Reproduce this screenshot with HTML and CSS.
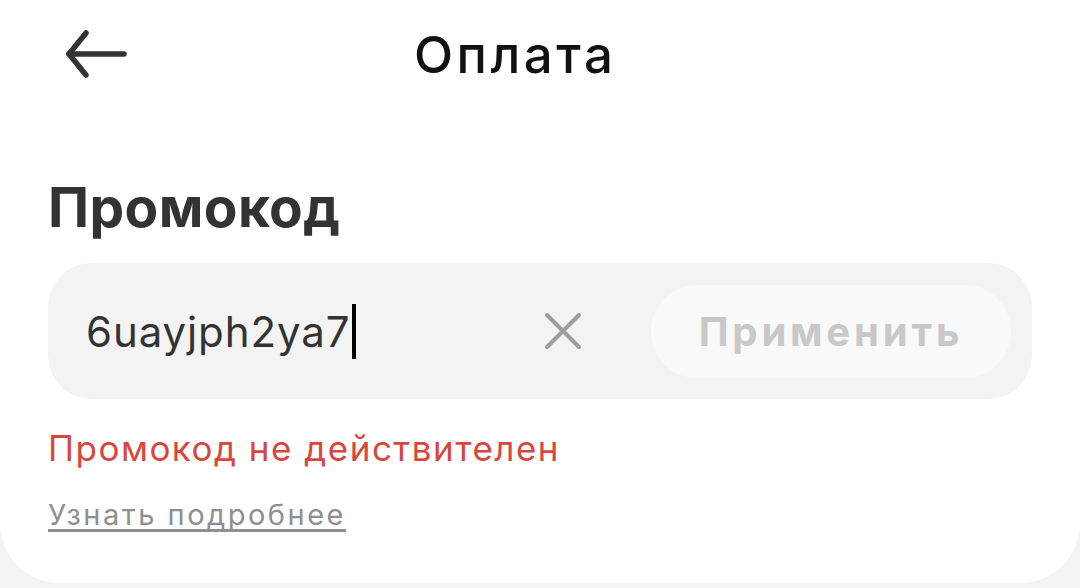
FILE: index.html
```html
<!DOCTYPE html>
<html lang="ru">
<head>
<meta charset="utf-8">
<link rel="stylesheet" href="styles.css">
</head>
<body>
<div class="card">
  <header class="topbar">
    <button class="back" aria-label="Назад">
      <svg width="62" height="48" viewBox="0 0 62 48" fill="none" stroke="#333" stroke-width="5.5" stroke-linecap="round" stroke-linejoin="round">
        <path d="M59 24H4"/>
        <path d="M21 3L4 24L21 45"/>
      </svg>
    </button>
    <h2 class="title">Оплата</h2>
  </header>
  <section class="content">
    <h1 class="heading">Промокод</h1>
    <div class="promo">
      <div class="field">
        <span class="value">6uayjph2ya7</span><span class="caret"></span>
      </div>
      <span class="clear" aria-label="Очистить">
        <svg width="38" height="38" viewBox="0 0 38 38" fill="none" stroke="#9e9e9e" stroke-width="4" stroke-linecap="round">
          <path d="M3 3L35 35M35 3L3 35"/>
        </svg>
      </span>
      <button class="apply">Применить</button>
    </div>
    <p class="error">Промокод не действителен</p>
    <a class="more" href="#">Узнать подробнее</a>
  </section>
</div>
</body>
</html>
```
FILE: styles.css
```css
html, body {
  margin: 0;
  padding: 0;
  background: #f3f3f3;
  font-family: "Inter", "Open Sans", sans-serif;
}
.card {
  background: #fff;
  height: 583px;
  border-radius: 0 0 60px 60px;
  overflow: hidden;
}
.topbar {
  height: 108px;
  display: flex;
  align-items: center;
  position: relative;
}
.back {
  background: none;
  border: 0;
  padding: 0;
  margin-left: 65px;
  margin-top: 0;
  display: flex;
}
.title {
  margin: 0 0 0 287px;
  font-size: 51px;
  font-weight: 500;
  color: #111;
  letter-spacing: 3.5px;
}
.content {
  padding: 0 48px;
}
.heading {
  margin: 66px 0 0;
  font-size: 55px;
  line-height: 66px;
  font-weight: 700;
  color: #333;
  letter-spacing: 0.4px;
}
.promo {
  margin-top: 23px;
  height: 136px;
  background: #f3f3f3;
  border-radius: 44px;
  display: flex;
  align-items: center;
  padding: 0 21px 0 38px;
}
.field {
  flex: 1;
  display: flex;
  align-items: center;
}
.value {
  font-size: 42px;
  color: #333;
  letter-spacing: 0.9px;
}
.caret {
  display: inline-block;
  width: 4px;
  height: 55px;
  background: #000;
  margin-left: 2px;
}
.clear {
  display: flex;
  margin-right: 69px;
}
.apply {
  width: 360px;
  height: 93px;
  border: 0;
  border-radius: 47px;
  background: #f9f9f9;
  color: #c8c8c8;
  font-family: inherit;
  font-size: 40px;
  font-weight: 700;
  letter-spacing: 3.8px;
  padding: 0;
}
.error {
  margin: 26px 0 0;
  font-size: 35px;
  line-height: 46px;
  color: #d8473d;
  letter-spacing: 1.5px;
}
.more {
  display: inline-block;
  margin-top: 26px;
  font-size: 29px;
  color: #8f8f8f;
  text-decoration: underline;
  text-decoration-thickness: 3px;
  text-underline-offset: 4px;
  text-decoration-skip-ink: none;
  letter-spacing: 2.5px;
}
```
